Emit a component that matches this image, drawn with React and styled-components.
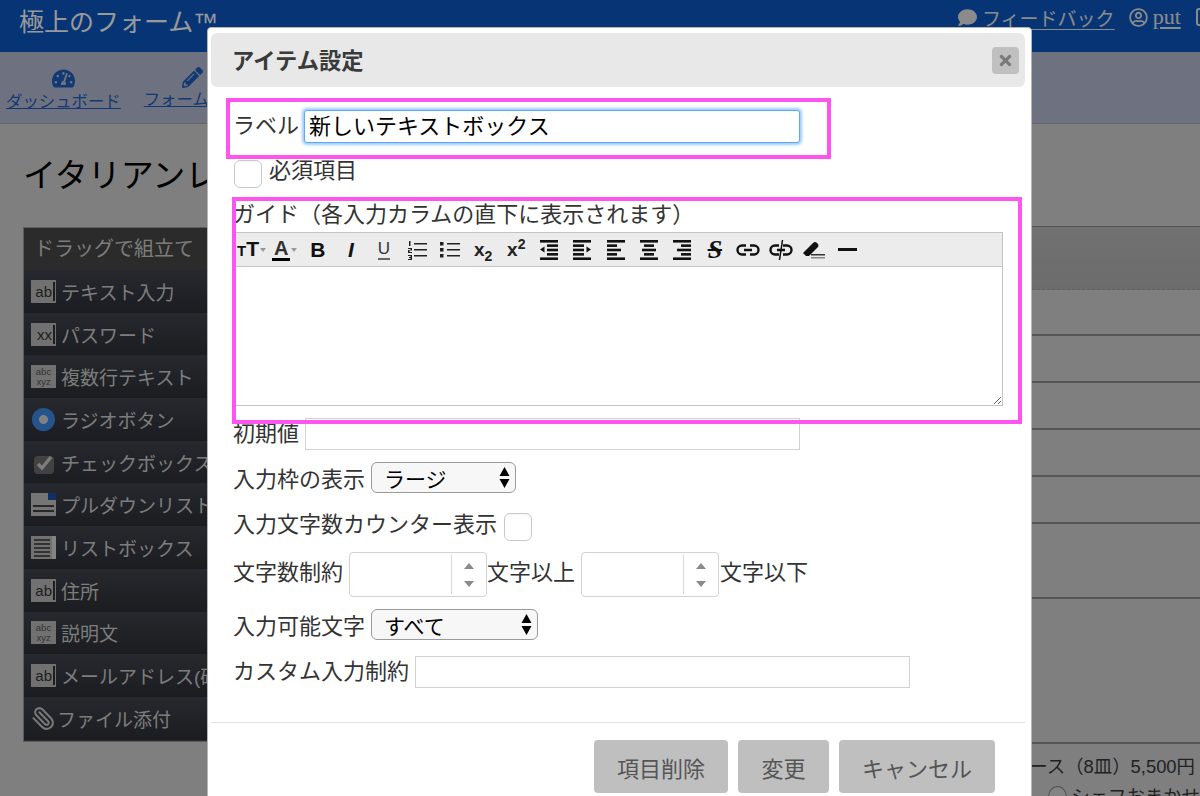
import React from "react";
import styled, { createGlobalStyle } from "styled-components";
import { FaComment, FaRegUserCircle, FaTachometerAlt, FaPencilAlt, FaTimes } from "react-icons/fa";
import { Paperclip } from "lucide-react";

const SANS = `"Liberation Sans", "Noto Sans CJK JP", sans-serif`;

const GlobalStyle = createGlobalStyle`
    html, body {
        margin: 0;
        height: 796px;
        overflow: hidden;
        background: #d4d4d4;
        font-family: ${SANS};
    }
    * {
        box-sizing: border-box;
    }
`;

const App = () => {
    return (
        <>
            <GlobalStyle />
            <Page />
            <Overlay />
            <SettingsModal />
        </>
    );
};

export default App;

/* page behind the modal */

const paletteItems = [
    ["ab", "テキスト入力"],
    ["xx", "パスワード"],
    ["abc", "複数行テキスト"],
    ["radio", "ラジオボタン"],
    ["check", "チェックボックス"],
    ["pull", "プルダウンリスト"],
    ["list", "リストボックス"],
    ["ab", "住所"],
    ["abc", "説明文"],
    ["ab", "メールアドレス(確認)"],
    ["clip", "ファイル添付"],
];

const PaletteIcon = ({ kind }) => {
    if (kind === "ab" || kind === "xx") {
        return <CaretBox>{kind}<i /></CaretBox>;
    }
    if (kind === "abc") {
        return <TinyBox>abc<br />xyz</TinyBox>;
    }
    if (kind === "radio") {
        return <RadioDot />;
    }
    if (kind === "clip") {
        return <ClipIcon><Paperclip size={25} strokeWidth={2} /></ClipIcon>;
    }
    if (kind === "check") {
        return (
            <svg width="25" height="24" viewBox="0 0 25 24">
                <rect x="3" y="6" width="20" height="18" rx="4" fill="#6f6f6f" />
                <path d="M7 14l4 4 9-11" fill="none" stroke="#d0d0d0" strokeWidth="3.4" />
            </svg>
        );
    }
    if (kind === "pull") {
        return (
            <svg width="25" height="23" viewBox="0 0 25 23">
                <rect width="25" height="23" fill="#c4c4c4" />
                <rect x="17" y="0" width="8" height="7" fill="#1f4f9e" />
                <rect x="2" y="12" width="21" height="2" fill="#444" />
                <rect x="2" y="17" width="21" height="2" fill="#444" />
            </svg>
        );
    }
    return (
        <svg width="25" height="23" viewBox="0 0 25 23">
            <rect width="25" height="23" fill="#bdbdbd" />
            <rect x="21" y="0" width="4" height="23" fill="#ddd" />
            {[3, 7, 11, 15, 19].map((y) => (
                <rect key={y} x="3" y={y} width="16" height="2" fill="#555" />
            ))}
        </svg>
    );
};

const rowHeights = [63, 46, 47, 47, 47, 47, 75, 145];

const Page = () => (
    <>
        <Header>
            <Logo>極上のフォーム™</Logo>
            <HeaderLinks>
                <FaComment size={19} />
                <HeaderLink>フィードバック</HeaderLink>
                <UserIcon><FaRegUserCircle size={19} /></UserIcon>
                <HeaderLink $serif>put</HeaderLink>
                <LogoutBox />
            </HeaderLinks>
        </Header>
        <Nav>
            <NavItem>
                <FaTachometerAlt size={23} />
                <a href="#">ダッシュボード</a>
            </NavItem>
            <NavItem>
                <FaPencilAlt size={21} />
                <a href="#">フォーム編集</a>
            </NavItem>
        </Nav>
        <Main>
            <Title>イタリアンレストラン</Title>
            <Columns>
                <Palette>
                    <PaletteHead>ドラッグで組立て</PaletteHead>
                    {paletteItems.map(([kind, label]) => (
                        <PaletteRow key={label} $gap={kind === "clip" ? 1 : 5}>
                            <PaletteIconSlot><PaletteIcon kind={kind} /></PaletteIconSlot>
                            <span>{label}</span>
                        </PaletteRow>
                    ))}
                </Palette>
                <Preview>
                    {rowHeights.map((h, i) => (
                        <PreviewRow key={h + "-" + i} $h={h} $head={i === 0} />
                    ))}
                    <PriceLine>コース（8皿）5,500円</PriceLine>
                    <OptionLine><OptionRadio />シェフおまかせ</OptionLine>
                </Preview>
            </Columns>
        </Main>
    </>
);

const Header = styled.header`
    height: 52px;
    background: #0a58c3;
    display: flex;
    align-items: flex-start;
    padding-left: 19px;
    overflow: hidden;
`;

const Logo = styled.div`
    flex: 0 0 939px;
    padding-top: 5px;
    font-size: 25px;
    line-height: 35px;
    color: #fff;
`;

const HeaderLinks = styled.div`
    flex: 0 0 auto;
    display: flex;
    align-items: center;
    height: 34px;
    color: #e8e8e8;
`;

const HeaderLink = styled.a`
    margin-left: 5px;
    font-family: ${(props) => (props.$serif ? `"Liberation Serif", serif` : "inherit")};
    font-size: ${(props) => (props.$serif ? 22 : 19)}px;
    text-decoration: underline;
    text-underline-offset: 3px;
    white-space: nowrap;
`;

const UserIcon = styled.span`
    display: flex;
    margin-left: 14px;
`;

const LogoutBox = styled.span`
    flex: 0 0 auto;
    width: 16px;
    height: 18px;
    margin-left: 15px;
    border: 2px solid #e8e8e8;
    border-radius: 3px;
`;

const Nav = styled.nav`
    height: 72px;
    background: #b7bed5;
    border-bottom: 1px solid #a9a9a9;
    display: flex;
    gap: 23px;
    padding: 15px 0 0 6px;
`;

const NavItem = styled.div`
    display: flex;
    flex-direction: column;
    align-items: center;
    color: #1f5fc0;
    a {
        color: #1f5fc0;
        font-size: 16.4px;
        line-height: 22px;
        white-space: nowrap;
    }
`;

const Main = styled.main`
    padding: 31px 0 0 23px;
`;

const Title = styled.h1`
    margin: 0;
    font-size: 33px;
    line-height: 42px;
    font-weight: 400;
    color: #000;
    white-space: nowrap;
`;

const Columns = styled.div`
    display: flex;
    align-items: flex-start;
    margin-top: 30px;
`;

const Palette = styled.aside`
    flex: 0 0 300px;
    background: #484848;
    border: 1px solid #999;
    height: 515px;
    overflow: hidden;
    color: #cfcfcf;
`;

const PaletteHead = styled.div`
    height: 42px;
    padding-left: 10px;
    font-size: 20px;
    line-height: 42px;
    white-space: nowrap;
`;

const PaletteRow = styled.div`
    height: 42.7px;
    display: flex;
    align-items: center;
    padding-left: 7px;
    gap: ${(props) => props.$gap}px;
    font-size: 19px;
    white-space: nowrap;
    background: linear-gradient(#40444c, #2d3037);
`;

const PaletteIconSlot = styled.span`
    flex: 0 0 25px;
    display: flex;
    align-items: center;
    justify-content: center;
`;

const CaretBox = styled.span`
    width: 25px;
    height: 23px;
    display: flex;
    align-items: center;
    justify-content: flex-end;
    gap: 1px;
    padding-right: 1px;
    background: #bdbdbd;
    color: #333;
    font-size: 15px;
    i {
        width: 2px;
        height: 19px;
        background: #333;
    }
`;

const TinyBox = styled.span`
    width: 25px;
    height: 23px;
    background: #bdbdbd;
    color: #555;
    font-size: 9.5px;
    line-height: 10px;
    padding-top: 2px;
    text-align: center;
`;

const RadioDot = styled.span`
    width: 23px;
    height: 23px;
    border-radius: 50%;
    background: radial-gradient(circle, #d8d8d8 0 4px, #3f8be8 5px);
`;

const ClipIcon = styled.span`
    display: flex;
    color: #c8c8c8;
    transform: scaleX(-1);
`;

const Preview = styled.section`
    flex: 1;
    min-width: 0;
    margin-top: -1px;
    border-top: 1px solid #8e8e8e;
`;

const PreviewRow = styled.div`
    height: ${(props) => props.$h}px;
    background: ${(props) => (props.$head ? "linear-gradient(#bcbcbc, #b5b5b5)" : "transparent")};
    border-bottom: ${(props) => (props.$head ? "1px dashed #94a8a8" : "2px solid #8f8f8f")};
`;

const PriceLine = styled.div`
    margin-top: 10px;
    padding-right: 5px;
    text-align: right;
    font-size: 18.4px;
    line-height: 26px;
    color: #383838;
    white-space: nowrap;
`;

const OptionLine = styled.div`
    display: flex;
    align-items: center;
    gap: 4px;
    margin: 5px 0 0 725px;
    font-size: 18.4px;
    line-height: 24px;
    color: #383838;
    white-space: nowrap;
`;

const OptionRadio = styled.span`
    width: 22px;
    height: 22px;
    border: 1px solid #888;
    border-radius: 50%;
    background: #ddd;
`;

const Overlay = styled.div`
    position: fixed;
    inset: 0;
    background: rgba(0, 0, 0, 0.4);
`;

/* modal */

const Bars = ({ rows, children }) => (
    <svg width="18" height="20" viewBox="0 0 18 20" fill="#111">
        {rows.map(([x, w], i) => (
            <rect key={i} x={x} y={i * 4.35} width={w} height="2.6" />
        ))}
        {children}
    </svg>
);

const ToolbarIcons = () => (
    <>
        <ToolButton><IconText><small>T</small>T</IconText><Caret /></ToolButton>
        <ToolButton><FontColor>A</FontColor><Caret /></ToolButton>
        <ToolButton><IconText>B</IconText></ToolButton>
        <ToolButton><IconText $italic>I</IconText></ToolButton>
        <ToolButton><Underlined>U</Underlined></ToolButton>
        <ToolButton>
            <svg width="20" height="20" viewBox="0 0 20 20" fill="#222">
                <rect x="7" y="3" width="13" height="1.5" />
                <rect x="7" y="9" width="13" height="1.5" />
                <rect x="7" y="15" width="13" height="1.5" />
                <rect x="2" y="1" width="1.5" height="5" />
                <path d="M1 8h4v2.500H2.500V12H5v1H1v-3h2.500V9H1z" />
                <path d="M1 15h4v5H1v-1h2.500v-1H2v-1h1.500v-1H1z" />
            </svg>
        </ToolButton>
        <ToolButton>
            <svg width="20" height="20" viewBox="0 0 20 20" fill="#222">
                <rect x="7" y="3" width="13" height="1.5" />
                <rect x="7" y="9" width="13" height="1.5" />
                <rect x="7" y="15" width="13" height="1.5" />
                <rect x="0" y="2" width="3.5" height="3.5" />
                <rect x="0" y="8" width="3.5" height="3.5" />
                <rect x="0" y="14" width="3.5" height="3.5" />
            </svg>
        </ToolButton>
        <ToolButton><Script>x<sub>2</sub></Script></ToolButton>
        <ToolButton><Script>x<sup>2</sup></Script></ToolButton>
        <ToolButton>
            <Bars rows={[[0, 18], [7, 11], [7, 11], [7, 11], [0, 18]]}>
                <path d="M4.5 6.5v6L0 9.5z" />
            </Bars>
        </ToolButton>
        <ToolButton>
            <Bars rows={[[0, 18], [0, 11], [0, 11], [0, 11], [0, 18]]}>
                <path d="M13.5 6.5v6L18 9.5z" />
            </Bars>
        </ToolButton>
        <ToolButton><Bars rows={[[0, 18], [0, 10], [0, 14], [0, 10], [0, 18]]} /></ToolButton>
        <ToolButton><Bars rows={[[0, 18], [4, 10], [2, 14], [4, 10], [0, 18]]} /></ToolButton>
        <ToolButton><Bars rows={[[0, 18], [8, 10], [4, 14], [8, 10], [0, 18]]} /></ToolButton>
        <ToolButton><Strike>S</Strike></ToolButton>
        <ToolButton>
            <svg width="24" height="12" viewBox="0 0 24 12" fill="none" stroke="#111" strokeWidth="2.4">
                <path d="M10 1.500H6a4.500 4.500 0 0 0 0 9h4M14 1.500h4a4.500 4.500 0 0 1 0 9h-4M8 6h8" />
            </svg>
        </ToolButton>
        <ToolButton>
            <svg width="24" height="20" viewBox="0 0 24 20" fill="none" stroke="#111" strokeWidth="2.4">
                <path d="M10 5.500H6a4.500 4.500 0 0 0 0 9h4M14 5.500h4a4.500 4.500 0 0 1 0 9h-4M8 10h8" />
                <path d="M13.500 0L10.500 20" strokeWidth="1.5" />
            </svg>
        </ToolButton>
        <ToolButton>
            <svg width="22" height="18" viewBox="0 0 22 18">
                <path d="M0 12L10 2q2-2 4 0l1 1q1 2 0 3L6 15H3z" fill="#111" />
                <rect x="8" y="13" width="14" height="1.5" fill="#333" />
                <rect x="8" y="16" width="14" height="1.5" fill="#888" />
            </svg>
        </ToolButton>
        <ToolButton>
            <svg width="19" height="3" viewBox="0 0 19 3"><rect width="19" height="3" fill="#111" /></svg>
        </ToolButton>
    </>
);

const NumberBox = () => (
    <NumberWrap>
        <NumberInput type="text" aria-label="文字数" />
        <Spinner>
            <SpinArrow />
            <SpinArrow $down />
        </Spinner>
    </NumberWrap>
);

const Select = ({ width, value }) => (
    <SelectWrap $width={width}>
        <NativeSelect defaultValue={value}>
            <option>{value}</option>
        </NativeSelect>
        <SelectArrows>
            <svg width="11" height="25" viewBox="0 0 11 25" fill="#000">
                <path d="M5.5 2L10.5 11H.5zM5.5 23L.5 14H10.5z" />
            </svg>
        </SelectArrows>
    </SelectWrap>
);

const SettingsModal = () => (
    <Modal>
        <ModalHead>
            <ModalTitle>アイテム設定</ModalTitle>
            <CloseButton><FaTimes size={17} /></CloseButton>
        </ModalHead>
        <ModalBody>
            <FormRow $top={23} $gap={5}>
                <FieldLabel $nudge={-1}>ラベル</FieldLabel>
                <TextInput $focused defaultValue="新しいテキストボックス" />
            </FormRow>
            <FormRow $top={17} $gap={7}>
                <CheckBox />
                <FieldLabel $nudge={-3}>必須項目</FieldLabel>
            </FormRow>
            <GuideLabel>ガイド（各入力カラムの直下に表示されます）</GuideLabel>
            <Toolbar><ToolbarIcons /></Toolbar>
            <Editor />
            <FormRow $top={12}>
                <FieldLabel>初期値</FieldLabel>
                <TextInput $width={495} />
            </FormRow>
            <FormRow $top={12}>
                <FieldLabel $nudge={2}>入力枠の表示</FieldLabel>
                <Select width={145} value="ラージ" />
            </FormRow>
            <FormRow $top={20}>
                <FieldLabel $nudge={-2}>入力文字数カウンター表示</FieldLabel>
                <CheckBox />
            </FormRow>
            <FormRow $top={11} $gap={0}>
                <FieldLabel $nudge={-2}>文字数制約</FieldLabel>
                <Spaced $size={6} />
                <NumberBox />
                <FieldLabel $nudge={-2}>文字以上</FieldLabel>
                <Spaced $size={6} />
                <NumberBox />
                <Spaced $size={1} />
                <FieldLabel $nudge={-2}>文字以下</FieldLabel>
            </FormRow>
            <FormRow $top={12}>
                <FieldLabel $nudge={2}>入力可能文字</FieldLabel>
                <Select width={167} value="すべて" />
            </FormRow>
            <FormRow $top={16}>
                <FieldLabel>カスタム入力制約</FieldLabel>
                <TextInput $width={495} />
            </FormRow>
        </ModalBody>
        <Footer>
            <FooterButton $width={134}>項目削除</FooterButton>
            <FooterButton $width={91}>変更</FooterButton>
            <FooterButton $width={156}>キャンセル</FooterButton>
        </Footer>
        <Highlight $left={18} $top={70} $width={605} $height={61} />
        <Highlight $left={24} $top={169} $width={790} $height={227} />
    </Modal>
);

const Modal = styled.div`
    position: fixed;
    top: 27px;
    left: 207px;
    width: 825px;
    height: 800px;
    background: #fff;
    border: 1px solid #b5b5b5;
    border-radius: 4px 4px 0 0;
    padding: 5px 6px 0 3px;
    color: #333;
    font-size: 22px;
`;

const ModalHead = styled.div`
    height: 54px;
    display: flex;
    align-items: center;
    justify-content: space-between;
    padding: 0 6px 0 21px;
    background: #e8e8e8;
    border-radius: 6px;
`;

const ModalTitle = styled.h2`
    margin: 0 0 2px;
    font-size: 22.3px;
    font-weight: 700;
    color: #3a3a3a;
`;

const CloseButton = styled.span`
    width: 27px;
    height: 27px;
    display: flex;
    align-items: center;
    justify-content: center;
    background: #c0c0c0;
    border-radius: 4px;
    color: #7a7a7a;
`;

const ModalBody = styled.div`
    padding-left: 22px;
`;

const FormRow = styled.div`
    display: flex;
    align-items: center;
    gap: ${(props) => (props.$gap === undefined ? 6 : props.$gap)}px;
    margin-top: ${(props) => props.$top}px;
    line-height: 28px;
    white-space: nowrap;
`;

const FieldLabel = styled.span`
    transform: translateY(${(props) => props.$nudge || 0}px);
`;

const Spaced = styled.span`
    flex: 0 0 ${(props) => props.$size}px;
`;

const TextInput = styled.input`
    width: ${(props) => props.$width || 496}px;
    height: ${(props) => (props.$focused ? 33 : 32)}px;
    padding: 0 4px 5px;
    font: inherit;
    color: #000;
    outline: none;
    border: 1px solid ${(props) => (props.$focused ? "#5ea9f5" : "#d2d2d2")};
    border-radius: ${(props) => (props.$focused ? "3px" : "0")};
    box-shadow: ${(props) => (props.$focused ? "0 0 3px 2px #9bcbfb" : "none")};
`;

const CheckBox = styled.span`
    flex: 0 0 28px;
    height: 28px;
    margin-left: 1px;
    border: 1px solid #c9c9c9;
    border-radius: 6px;
    background: #fff;
    box-shadow: inset 0 1px 1px rgba(0, 0, 0, 0.04);
`;

const GuideLabel = styled.div`
    margin-top: 12px;
    height: 29px;
    line-height: 29px;
    white-space: nowrap;
`;

const Toolbar = styled.div`
    width: 769px;
    height: 35px;
    margin: 3px 0 0 1px;
    display: flex;
    align-items: center;
    background: #ececec;
    border: 1px solid #c4c4c4;
`;

const ToolButton = styled.span`
    flex: 0 0 33.1px;
    display: flex;
    align-items: center;
    justify-content: center;
    color: #111;
`;

const Editor = styled.textarea`
    display: block;
    width: 769px;
    height: 140px;
    margin: -1px 0 0 1px;
    background: #fff;
    border: 1px solid #c4c4c4;
    outline: none;
    resize: vertical;
`;

const SelectWrap = styled.span`
    position: relative;
    display: block;
    width: ${(props) => props.$width}px;
    height: 31px;
`;

const NativeSelect = styled.select`
    appearance: none;
    width: 100%;
    height: 100%;
    padding: 3px 0 0 12px;
    font: inherit;
    font-size: 21px;
    color: #000;
    background: #f7f7f7;
    border: 1px solid #9a9a9a;
    border-radius: 6px;
`;

const SelectArrows = styled.span`
    position: absolute;
    top: 3px;
    right: 6px;
    display: flex;
    pointer-events: none;
`;

const NumberWrap = styled.span`
    flex: 0 0 138px;
    height: 45px;
    display: flex;
    border: 1px solid #d2d2d2;
    border-radius: 4px;
    background: #fff;
`;

const NumberInput = styled.input`
    width: 101px;
    border: 0;
    border-radius: 4px;
    outline: none;
    background: transparent;
`;

const Spinner = styled.span`
    flex: 1;
    margin: 2px 0;
    display: flex;
    flex-direction: column;
    align-items: center;
    justify-content: center;
    gap: 12px;
    border-left: 1px solid #d8d8d8;
`;

const SpinArrow = styled.i`
    width: 0;
    height: 0;
    border-left: 5px solid transparent;
    border-right: 5px solid transparent;
    ${(props) =>
        props.$down ? "border-top: 6px solid #8a8a8a;" : "border-bottom: 6px solid #8a8a8a;"}
`;

const Footer = styled.div`
    margin-top: 34px;
    padding: 17px 30px 0 0;
    border-top: 1px solid #e2e2e2;
    display: flex;
    justify-content: flex-end;
    gap: 10px;
`;

const FooterButton = styled.button`
    width: ${(props) => props.$width}px;
    height: 53px;
    padding: 0;
    border: 0;
    border-radius: 4px;
    background: #bfbfbf;
    color: #555;
    font: inherit;
`;

const Highlight = styled.div`
    position: absolute;
    left: ${(props) => props.$left}px;
    top: ${(props) => props.$top}px;
    width: ${(props) => props.$width}px;
    height: ${(props) => props.$height}px;
    border: 4px solid #ff55f0;
    pointer-events: none;
`;

const Caret = styled.i`
    display: inline-block;
    width: 0;
    height: 0;
    margin-left: 1px;
    border-left: 3px solid transparent;
    border-right: 3px solid transparent;
    border-top: 4px solid #999;
`;

const IconText = styled.span`
    font-size: 21px;
    line-height: 22px;
    font-weight: 700;
    font-style: ${(props) => (props.$italic ? "italic" : "normal")};
    color: #111;
    small {
        font-size: 15px;
    }
`;

const FontColor = styled.span`
    font-size: 20px;
    line-height: 20px;
    font-weight: 700;
    color: #333;
    border-bottom: 3px solid #000;
    padding: 0 2px;
`;

const Underlined = styled.span`
    font-size: 17px;
    line-height: 18px;
    color: #333;
    border-bottom: 2px solid #666;
`;

const Script = styled.span`
    font-size: 19px;
    font-weight: 700;
    color: #222;
    line-height: 20px;
    sub, sup {
        font-size: 14px;
        line-height: 0;
    }
`;

const Strike = styled.span`
    font-family: "Liberation Serif", serif;
    font-size: 26px;
    font-weight: 700;
    font-style: italic;
    line-height: 22px;
    color: #111;
    text-decoration: line-through;
    text-decoration-thickness: 2px;
`;
